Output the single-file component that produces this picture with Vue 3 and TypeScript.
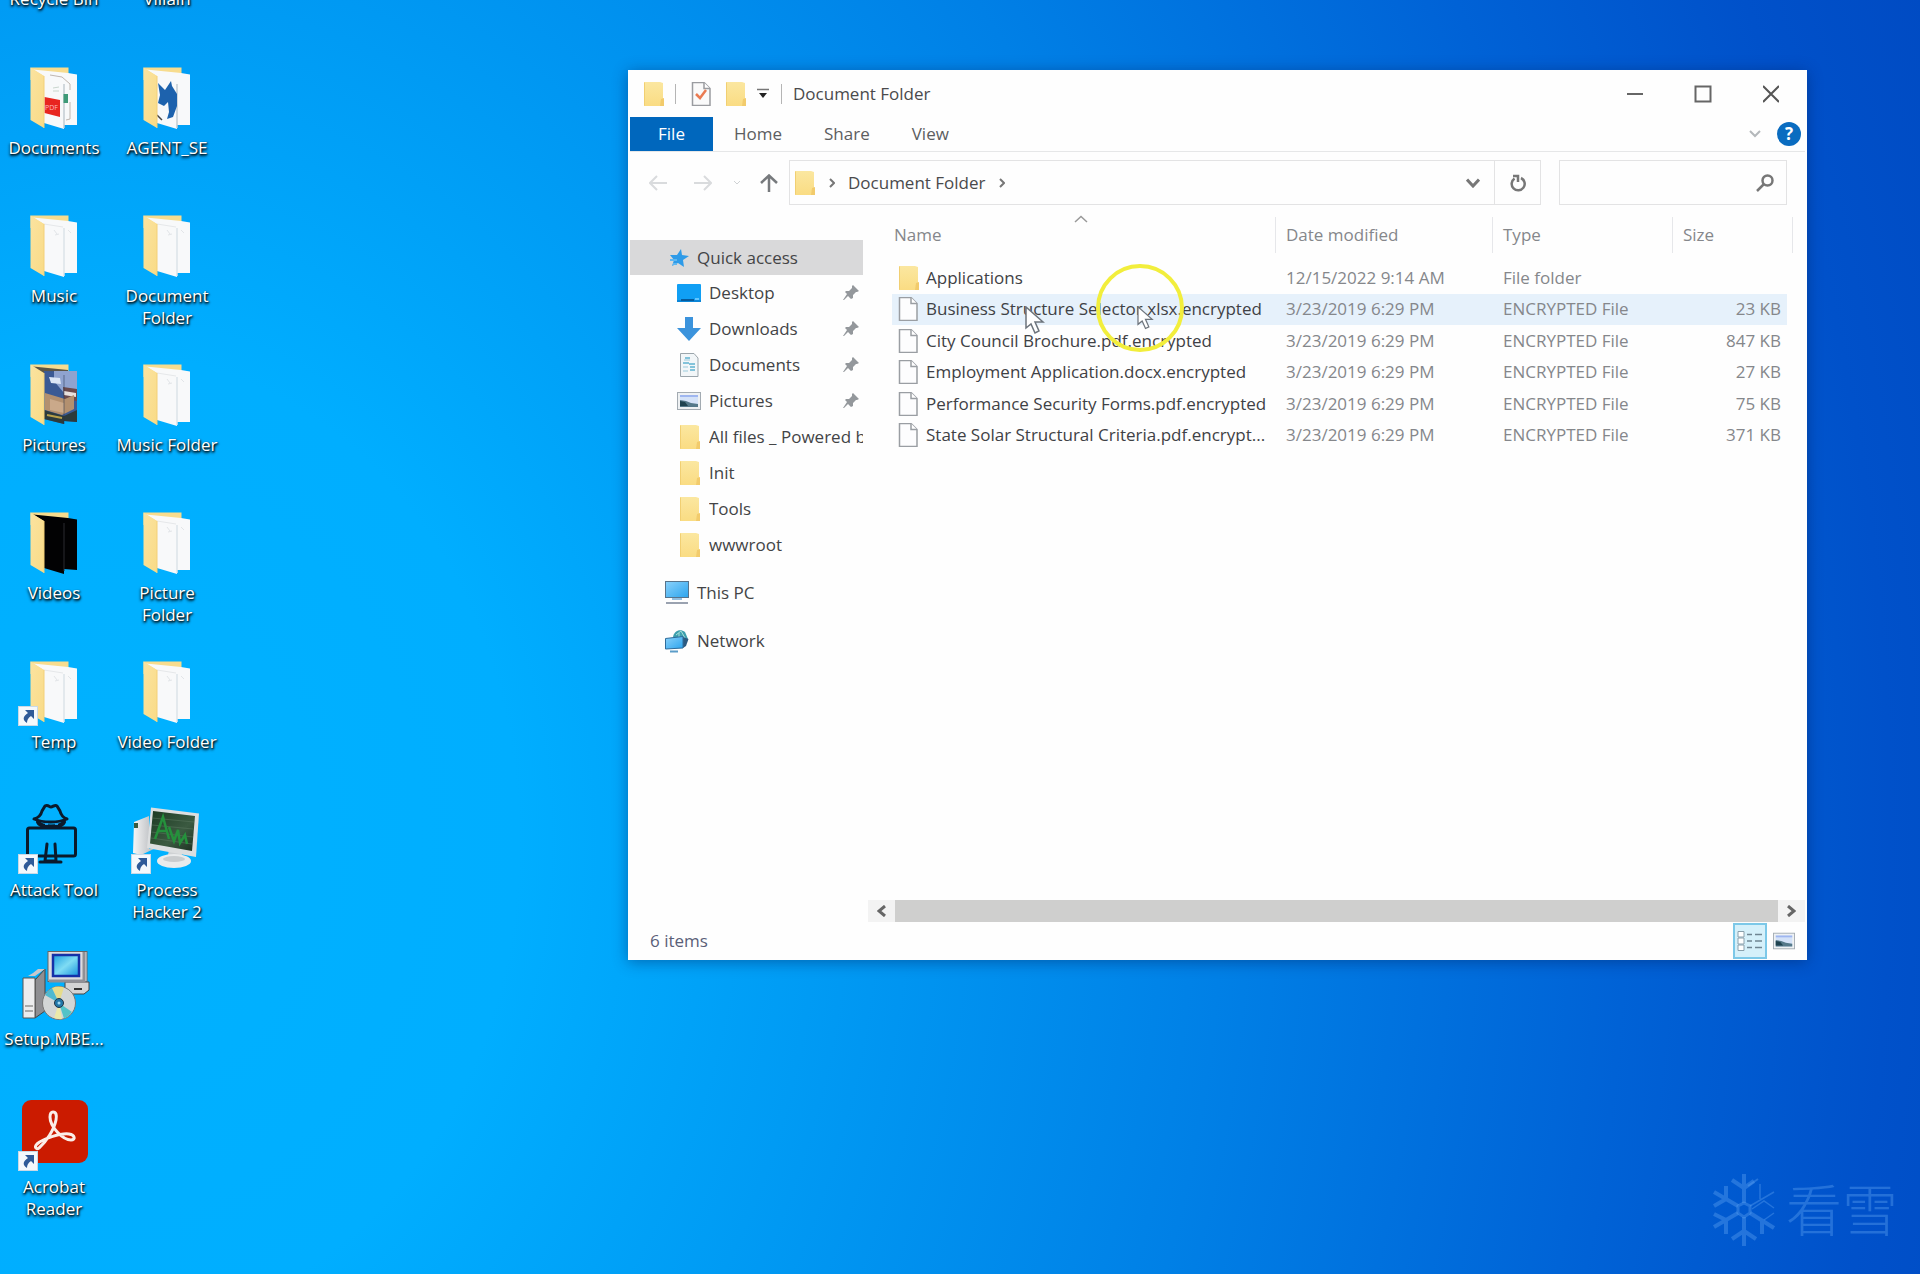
<script setup lang="ts">
interface DesktopItem {
  label: string
  icon: string
  shortcut?: boolean
}

interface FileRow {
  name: string
  date: string
  type: string
  size: string
  folder?: boolean
  hover?: boolean
}

interface Place {
  label: string
  icon: string
  pinned?: boolean
}

const columns: DesktopItem[][] = [
  [
    { label: 'Recycle Bin', icon: 'folder-plain' },
    { label: 'Documents', icon: 'folder-documents' },
    { label: 'Music', icon: 'folder-plain' },
    { label: 'Pictures', icon: 'folder-pictures' },
    { label: 'Videos', icon: 'folder-videos' },
    { label: 'Temp', icon: 'folder-plain', shortcut: true },
    { label: 'Attack Tool', icon: 'attack', shortcut: true },
    { label: 'Setup.MBE...', icon: 'setup' },
    { label: 'Acrobat Reader', icon: 'acrobat', shortcut: true },
  ],
  [
    { label: 'Villain', icon: 'folder-plain' },
    { label: 'AGENT_SE', icon: 'folder-agent' },
    { label: 'Document Folder', icon: 'folder-plain' },
    { label: 'Music Folder', icon: 'folder-plain' },
    { label: 'Picture Folder', icon: 'folder-plain' },
    { label: 'Video Folder', icon: 'folder-plain' },
    { label: 'Process Hacker 2', icon: 'process', shortcut: true },
  ],
]

const tabs: string[] = ['Home', 'Share', 'View']

const quickAccess: Place[] = [
  { label: 'Desktop', icon: 'desktop', pinned: true },
  { label: 'Downloads', icon: 'download', pinned: true },
  { label: 'Documents', icon: 'document', pinned: true },
  { label: 'Pictures', icon: 'picture', pinned: true },
  { label: 'All files _ Powered by', icon: 'folder' },
  { label: 'Init', icon: 'folder' },
  { label: 'Tools', icon: 'folder' },
  { label: 'wwwroot', icon: 'folder' },
]

const stamp = '3/23/2019 6:29 PM'
const kind = 'ENCRYPTED File'

const files: FileRow[] = [
  { name: 'Applications', date: '12/15/2022 9:14 AM', type: 'File folder', size: '', folder: true },
  { name: 'Business Structure Selector.xlsx.encrypted', date: stamp, type: kind, size: '23 KB', hover: true },
  { name: 'City Council Brochure.pdf.encrypted', date: stamp, type: kind, size: '847 KB' },
  { name: 'Employment Application.docx.encrypted', date: stamp, type: kind, size: '27 KB' },
  { name: 'Performance Security Forms.pdf.encrypted', date: stamp, type: kind, size: '75 KB' },
  { name: 'State Solar Structural Criteria.pdf.encrypt...', date: stamp, type: kind, size: '371 KB' },
]
</script>

<template>
  <svg class="sprites" aria-hidden="true">
    <defs>
      <linearGradient id="g-flap" x1="0" y1="0" x2="1" y2="1">
        <stop offset="0" stop-color="#fbe3a0" />
        <stop offset="1" stop-color="#f9db86" />
      </linearGradient>
      <linearGradient id="g-small" x1="0" y1="0" x2="0" y2="1">
        <stop offset="0" stop-color="#fbe7a0" />
        <stop offset="1" stop-color="#fadc83" />
      </linearGradient>
      <linearGradient id="g-screen" x1="0" y1="0" x2="1" y2="1">
        <stop offset="0" stop-color="#8bd2fb" />
        <stop offset="1" stop-color="#2ba4ee" />
      </linearGradient>
      <linearGradient id="g-crt" x1="0" y1="0" x2="1" y2="1">
        <stop offset="0" stop-color="#1b9fe0" />
        <stop offset=".5" stop-color="#7fdcf4" />
        <stop offset="1" stop-color="#1590dc" />
      </linearGradient>
      <linearGradient id="g-tower" x1="0" y1="0" x2="1" y2="0">
        <stop offset="0" stop-color="#f6f6f6" />
        <stop offset="1" stop-color="#a9adb2" />
      </linearGradient>
      <linearGradient id="g-green" x1="0" y1="0" x2="1" y2="1">
        <stop offset="0" stop-color="#1c3a22" />
        <stop offset=".6" stop-color="#3b5a41" />
        <stop offset="1" stop-color="#1d2f22" />
      </linearGradient>
    </defs>

    <symbol id="folder-back" viewBox="0 0 72 72">
      <path d="M12.500 7.500H50.500V20H12.500Z" fill="#f7dc8e" />
    </symbol>
    <symbol id="folder-flap" viewBox="0 0 72 72">
      <path d="M12.500 7.500 26 16V68L12.500 60Z" fill="url(#g-flap)" />
      <path d="M26 16V68" stroke="#f3d078" stroke-width="1" />
    </symbol>

    <symbol id="folder-plain" viewBox="0 0 72 72">
      <use href="#folder-back" />
      <path d="M15 9.500 50 13 59 14.500V65H46V69L26 63V16Z" fill="#f8f9fa" />
      <path d="M46 20V68" stroke="#dde3e8" stroke-width="1.500" />
      <path d="M26 16 45 19" stroke="#e6e8ea" />
      <path d="M36 22l3 4M50 22l3 3M37 27l4-1" stroke="#e2e5e8" />
      <use href="#folder-flap" />
    </symbol>

    <symbol id="folder-documents" viewBox="0 0 72 72">
      <use href="#folder-back" />
      <path d="M15 9.500 50 13 59 14.500V65H46V69L26 63V16Z" fill="#f8f9fa" />
      <path d="M46 24V68" stroke="#c3cbd2" stroke-width="1.500" />
      <path d="M32 15 44 17 52 24V30M52 42V59L48 60" stroke="#bfb6b0" fill="none" />
      <path d="M45.500 34H50V43H45.500Z" fill="#3f9a78" />
      <path d="M35 28l6-1M35 31l6 0" stroke="#c9d6ce" />
      <path d="M26.500 37 42 40V57L26.500 53Z" fill="#e8251f" />
      <text x="27" y="50" font-size="7" font-family="Open Sans, sans-serif" fill="#fbb">PDF</text>
      <use href="#folder-flap" />
    </symbol>

    <symbol id="folder-agent" viewBox="0 0 72 72">
      <use href="#folder-back" />
      <path d="M15 9.500 50 13 59 14.500V65H46V69L26 63V16Z" fill="#f8f9fa" />
      <path d="M46 24V68" stroke="#c3cbd2" stroke-width="1.500" />
      <path d="M27 23 34 30 40 21 41 26 46 34V46L42 57 36 59 38 52 37 42 33 46 27 43 29 35Z" fill="#1d62ad" />
      <path d="M26 55l5 5" stroke="#444" stroke-width="1.500" />
      <use href="#folder-flap" />
    </symbol>

    <symbol id="folder-pictures" viewBox="0 0 72 72">
      <use href="#folder-back" />
      <path d="M15 9.500 50 13V20H26Z" fill="#5c5545" />
      <path d="M26 14 59 14.500V65L46 64V67L26 62Z" fill="#3b5a94" />
      <path d="M36 14H59V32L46 36 36 24Z" fill="#8fa3cf" />
      <path d="M31 20 42 21 43 27 33 26Z" fill="#dce6f5" />
      <path d="M45 30 59 32V44L46 42Z" fill="#6b4a4c" />
      <path d="M46 34 58 36V40L46 38Z" fill="#e8e0dd" />
      <path d="M27 36 47 42 56 38V52L44 58 27 53Z" fill="#b3906f" />
      <path d="M32 42 46 46V56L32 53Z" fill="#caa98a" />
      <path d="M26 53 46 59 59 53V65L46 64V67L26 62Z" fill="#2c3a3c" />
      <path d="M29 58 44 61" stroke="#b8a04a" stroke-width="2" />
      <path d="M46 18V67" stroke="#1f2f4c" stroke-opacity=".5" />
      <use href="#folder-flap" />
    </symbol>

    <symbol id="folder-videos" viewBox="0 0 72 72">
      <use href="#folder-back" />
      <path d="M15 9.500 50 13 59 14.500V65L46 64V69L26 63V16Z" fill="#020203" />
      <path d="M46 18V66" stroke="#2b2b30" />
      <use href="#folder-flap" />
    </symbol>

    <symbol id="attack" viewBox="0 0 72 72">
      <g fill="none" stroke="#0b1a2c" stroke-width="3" stroke-linejoin="round" stroke-linecap="round">
        <path d="M16 17C20 16 23 13 24 9L27 4C30 2 31 5 33 5S37 2 39 4L42 9C43 13 46 16 49 17 40 21 25 21 16 17Z" />
        <path d="M20 20C22 26 44 26 46 20" stroke-width="4" />
        <rect x="9.500" y="26" width="48" height="28" rx="2" />
        <path d="M29 42 27 59H38L37 42M22 60H43" />
      </g>
      <path d="M27 22h3M37 22h3" stroke="#1d9ce8" stroke-width="2" />
    </symbol>

    <symbol id="process" viewBox="0 0 72 72">
      <path d="M3 20 18 14V47L27 45 10 53 2 51Z" fill="url(#g-tower)" />
      <rect x="3" y="21" width="4" height="5" fill="#3b5a3f" />
      <path d="M38 48h12l2 10H36Z" fill="#cfd2d4" />
      <ellipse cx="43" cy="59" rx="17" ry="7" fill="#e9ebec" />
      <ellipse cx="43" cy="57" rx="11" ry="3" fill="#c9ccce" />
      <path d="M20 5.500 68 11.500 65 55 16 46Z" fill="#dcdedf" />
      <path d="M22 9 64 14 61 49 19 41.500Z" fill="url(#g-green)" />
      <path d="M21 16 63 20M21 23 62 27M20 30 62 35M20 36 61 42" stroke="#5d7a62" stroke-opacity=".5" />
      <path d="M24 37 32 15 38 37M27 29H36M38 25 43 39 47 28 49 41 54 33 56 42" fill="none" stroke="#25913c" stroke-width="2.500" />
    </symbol>

    <symbol id="setup" viewBox="0 0 72 72">
      <path d="M47 31H71V39L66 43H47Z" fill="#d4d4d4" stroke="#444" />
      <path d="M56 38h8" stroke="#333" stroke-width="2" />
      <rect x="30" y=".5" width="39" height="30" fill="#dcdcdf" stroke="#666" />
      <path d="M66 1V30H31" fill="none" stroke="#909096" stroke-width="3" />
      <rect x="35" y="4" width="26" height="21" fill="url(#g-crt)" stroke="#1531a8" stroke-width="2.500" />
      <path d="M17 29 27 18V60L17 67Z" fill="#8e8e92" stroke="#444" />
      <path d="M5 27H17V67H5Z" fill="#ececee" stroke="#555" />
      <path d="M5 28 10 25H17L27 18H20L15 22" fill="#c8c8cc" />
      <path d="M7 55h8M7 60h8" stroke="#aaa" stroke-width="2" />
      <circle cx="41" cy="52" r="16.500" fill="#d3d6d6" stroke="#777" />
      <path d="M41 52 34 37A16.500 16.500 0 0 1 46 36.500Z" fill="#e6dc8c" />
      <path d="M41 52 27 44A16.500 16.500 0 0 1 34 37Z" fill="#4fb9cf" />
      <path d="M41 52 54 61A16.500 16.500 0 0 1 46 67.500Z" fill="#53c3c8" />
      <path d="M41 52 44 68A16.500 16.500 0 0 1 36 67Z" fill="#ece9a9" />
      <circle cx="41" cy="52" r="4.500" fill="#2277a8" stroke="#234" />
      <circle cx="41" cy="52" r="1.500" fill="#9fd8f4" />
    </symbol>

    <symbol id="acrobat" viewBox="0 0 72 72">
      <rect x="4" y="1" width="66" height="63" rx="9" fill="#cb1b00" />
      <path
        d="M35 13C38 13 39 16 38 21 36 31 28 43 21 49 18 51 16 48 19 45 26 39 43 34 51 35 57 36 58 41 53 41 45 41 32 28 32 18 32 15 33 13 35 13Z"
        fill="none"
        stroke="#fbeee8"
        stroke-width="3"
        stroke-linejoin="round"
      />
    </symbol>

    <symbol id="folder" viewBox="0 0 24 24">
      <path d="M3 0H19L22 1V17L23 23 20 24H3Z" fill="url(#g-small)" />
      <path d="M19 24 20 17 23 16V24Z" fill="#f2cb6c" />
      <path d="M3.500 .5V23.500" stroke="#f1cf72" />
    </symbol>
    <symbol id="file" viewBox="0 0 24 24">
      <path d="M3.500 .5H15L21 6.500V23.500H3.500Z" fill="#fdfdfe" stroke="#9a9ea3" stroke-width="1.500" />
      <path d="M15 .5V6.500H21" fill="#fff" stroke="#9a9ea3" stroke-width="1.500" />
    </symbol>
    <symbol id="file-check" viewBox="0 0 24 24">
      <path d="M3.500 .5H15L21 6.500V23.500H3.500Z" fill="#fafafa" stroke="#9a9ca0" stroke-width="1.500" />
      <path d="M15 .5V6.500H21" fill="#fff" stroke="#9a9ca0" stroke-width="1.500" />
      <path d="M7 12 11 16 17 8" fill="none" stroke="#ea7b52" stroke-width="2.500" />
    </symbol>
    <symbol id="star" viewBox="0 0 24 24">
      <path d="M16 3 17 9 24 10 18 14 19 21 13 17 7 20 9 14 5 9 12 9Z" fill="#2e9be8" />
      <path d="M5 14h7M8 18h4" stroke="#5eb7f2" stroke-width="2" />
    </symbol>
    <symbol id="desktop" viewBox="0 0 24 24">
      <rect y="3" width="24" height="18" rx="1" fill="#109ff4" />
      <path d="M0 20H24" stroke="#0b86d8" stroke-width="2" />
      <path d="M4 19H17" stroke="#065b9c" stroke-width="2" />
      <path d="M18 18H22" stroke="#62c6ff" stroke-width="2" />
    </symbol>
    <symbol id="download" viewBox="0 0 24 24">
      <path d="M8 0H16V11H24L12 24 0 11H8Z" fill="#3b93dc" />
    </symbol>
    <symbol id="document" viewBox="0 0 24 24">
      <path d="M3.500 .5H17L21 5V23.500H3.500Z" fill="#f2f6f8" stroke="#9ba5ab" />
      <path d="M8 5h5M6 10h6M12 11h6M13 14h5M13 17h5" stroke="#5fb3d0" stroke-width="1.500" />
      <path d="M7 7h6M6 14h5M6 18h5" stroke="#9ccbdc" />
    </symbol>
    <symbol id="picture" viewBox="0 0 24 24">
      <rect x=".5" y="3.500" width="23" height="17" fill="#eef1f3" stroke="#a3abb2" />
      <rect x="3" y="6" width="18" height="12" fill="#d4e2f8" />
      <path d="M3 7H21" stroke="#9fb6f0" stroke-width="2" />
      <path d="M3 18V11L9 12 14 14 21 15V18Z" fill="#55798a" />
      <path d="M3 17V12L8 13 11 17Z" fill="#1f4350" />
    </symbol>
    <symbol id="pc" viewBox="0 0 24 24">
      <rect x=".5" y=".5" width="23" height="16" fill="url(#g-screen)" stroke="#57748c" />
      <path d="M7 18H17" stroke="#93bfe0" stroke-width="2" />
      <path d="M1 22H23" stroke="#9aa2b0" stroke-width="2" />
    </symbol>
    <symbol id="network" viewBox="0 0 24 24">
      <path d="M8 8C9 2 15 -1 20 3L23 10 18 18Z" fill="#3d9fae" />
      <path d="M11 6 16 2 20 9M14 4v8" stroke="#a7e0d8" fill="none" />
      <path d="M18 8 23.500 10 21 17 18 19Z" fill="#2c5a80" />
      <path d="M.5 9.500 18 7.500V19L.5 20Z" fill="url(#g-screen)" stroke="#2e6c9b" />
      <path d="M5 22.500H13" stroke="#5b9dc9" stroke-width="2" />
    </symbol>
    <symbol id="pin" viewBox="0 0 16 16">
      <path d="M10 0 16 6 14 7 13 7 10 10 10 13 8 14 5 11 1 15 0 15 4 9 2 7 3 6 6 6 9 3 9 1Z" fill="#94989c" />
    </symbol>
    <symbol id="cursor" viewBox="0 0 20 30">
      <path d="M1 1V22L6 18 10 27 14 25 10 16 18 16Z" fill="#fff" stroke="#6d747c" stroke-width="1.500" />
    </symbol>
    <symbol id="shortcut" viewBox="0 0 20 20">
      <rect x=".5" y=".5" width="19" height="19" fill="#f4f8fc" stroke="#c9d9e6" />
      <path d="M7 4H16V13L13 10C10 12 9 14 9 17 4 14 5 10 10 7Z" fill="#2f5a98" />
    </symbol>
  </svg>

  <main class="desktop">
    <section class="icons" aria-label="Desktop">
      <div v-for="(column, i) in columns" :key="i" class="icon-column">
        <button v-for="item in column" :key="item.label" type="button" class="icon">
          <span class="icon-art">
            <svg class="art"><use :href="'#' + item.icon" /></svg>
            <svg v-if="item.shortcut" class="badge"><use href="#shortcut" /></svg>
          </span>
          <span class="icon-label">{{ item.label }}</span>
        </button>
      </div>
    </section>

    <section class="window" aria-label="Document Folder">
      <header class="titlebar">
        <svg class="i24"><use href="#folder" /></svg>
        <span class="bar"></span>
        <button type="button" class="tool" aria-label="Properties"><svg class="i24"><use href="#file-check" /></svg></button>
        <button type="button" class="tool" aria-label="New folder"><svg class="i24"><use href="#folder" /></svg></button>
        <button type="button" class="customize" aria-label="Customize">
          <svg width="12" height="12" viewBox="0 0 12 12"><path d="M0 1.500H12" stroke="#777" stroke-width="1.500" /><path d="M2 5H10L6 10Z" fill="#222" /></svg>
        </button>
        <span class="bar"></span>
        <h1>Document Folder</h1>
        <div class="controls">
          <button type="button" aria-label="Minimize"><svg width="16" height="18" viewBox="0 0 16 18"><path d="M0 9H16" stroke="#666" stroke-width="2" /></svg></button>
          <button type="button" aria-label="Maximize"><svg width="18" height="18" viewBox="0 0 18 18"><rect x="1.500" y="1.500" width="15" height="15" fill="none" stroke="#666" stroke-width="2" /></svg></button>
          <button type="button" aria-label="Close"><svg width="16" height="18" viewBox="0 0 16 18"><path d="M0 1 16 17M16 1 0 17" stroke="#555" stroke-width="2" /></svg></button>
        </div>
      </header>

      <div class="ribbon">
        <button type="button" class="tab file-tab">File</button>
        <button v-for="tab in tabs" :key="tab" type="button" class="tab">{{ tab }}</button>
        <button type="button" class="expand" aria-label="Expand the ribbon">
          <svg width="12" height="8" viewBox="0 0 12 8"><path d="M1 1 6 6 11 1" fill="none" stroke="#b4b8bb" stroke-width="2" /></svg>
        </button>
        <button type="button" class="help" aria-label="Help">?</button>
      </div>

      <div class="address-row">
        <div class="nav">
          <button type="button" aria-label="Back"><svg width="18" height="16" viewBox="0 0 18 16"><path d="M18 8H2M8 1 1 8 8 15" fill="none" stroke="#d9dbdd" stroke-width="2" /></svg></button>
          <button type="button" aria-label="Forward"><svg width="18" height="16" viewBox="0 0 18 16"><path d="M0 8H16M10 1 17 8 10 15" fill="none" stroke="#d9dbdd" stroke-width="2" /></svg></button>
          <button type="button" class="recent" aria-label="Recent locations"><svg width="6" height="4" viewBox="0 0 6 4"><path d="M0 0 3 3 6 0" fill="none" stroke="#cfd2d4" /></svg></button>
          <button type="button" class="up" aria-label="Up"><svg width="18" height="18" viewBox="0 0 18 18"><path d="M9 18V2M1 9 9 1.500 17 9" fill="none" stroke="#777a7d" stroke-width="2.500" /></svg></button>
        </div>
        <div class="address">
          <svg class="i24"><use href="#folder" /></svg>
          <svg class="crumb" viewBox="0 0 6 10"><path d="M1 1 5 5 1 9" fill="none" stroke="#777" stroke-width="2" /></svg>
          <span>Document Folder</span>
          <svg class="crumb" viewBox="0 0 6 10"><path d="M1 1 5 5 1 9" fill="none" stroke="#777" stroke-width="2" /></svg>
          <button type="button" class="history" aria-label="Previous locations"><svg width="14" height="10" viewBox="0 0 14 10"><path d="M1 1.500 7 8 13 1.500" fill="none" stroke="#777" stroke-width="3" /></svg></button>
        </div>
        <button type="button" class="refresh" aria-label="Refresh">
          <svg width="16" height="18" viewBox="0 0 16 18"><path d="M11 4A6.500 6.500 0 1 1 4.500 4.500M3 2H8V8" fill="none" stroke="#777" stroke-width="2.500" /></svg>
        </button>
        <label class="search">
          <input type="search" aria-label="Search Document Folder" />
          <svg width="18" height="18" viewBox="0 0 18 18"><circle cx="11.500" cy="6.500" r="5" fill="none" stroke="#777" stroke-width="2.500" /><path d="M8 10 1 17" stroke="#777" stroke-width="2.500" /></svg>
        </label>
      </div>

      <div class="body">
        <nav class="places" aria-label="Places">
          <a href="#" class="place root current"><svg class="i24"><use href="#star" /></svg>Quick access</a>
          <a v-for="place in quickAccess" :key="place.label" href="#" class="place child">
            <svg class="i24"><use :href="'#' + place.icon" /></svg>
            <span class="place-name">{{ place.label }}</span>
            <svg v-if="place.pinned" class="pin"><use href="#pin" /></svg>
          </a>
          <a href="#" class="place root spaced"><svg class="i24"><use href="#pc" /></svg>This PC</a>
          <a href="#" class="place root spaced"><svg class="i24"><use href="#network" /></svg>Network</a>
        </nav>

        <div class="list">
          <table>
            <colgroup>
              <col />
              <col class="c-date" />
              <col class="c-type" />
              <col class="c-size" />
            </colgroup>
            <thead>
              <tr>
                <th>
                  <div class="head first">
                    Name
                    <svg class="sort" viewBox="0 0 14 8"><path d="M1 7 7 1.500 13 7" fill="none" stroke="#999" stroke-width="1.500" /></svg>
                  </div>
                </th>
                <th><div class="head">Date modified</div></th>
                <th><div class="head">Type</div></th>
                <th><div class="head">Size</div></th>
              </tr>
            </thead>
            <tbody>
              <tr v-for="file in files" :key="file.name" :class="{ hover: file.hover }">
                <td>
                  <div class="name">
                    <svg class="i24"><use :href="file.folder ? '#folder' : '#file'" /></svg>
                    <span>{{ file.name }}</span>
                  </div>
                </td>
                <td>{{ file.date }}</td>
                <td>{{ file.type }}</td>
                <td class="size">{{ file.size }}</td>
              </tr>
            </tbody>
          </table>

          <div class="scroll">
            <button type="button" aria-label="Scroll left"><svg width="9" height="12" viewBox="0 0 9 12"><path d="M8 1 2 6 8 11" fill="none" stroke="#666" stroke-width="3" /></svg></button>
            <span class="thumb"></span>
            <button type="button" aria-label="Scroll right"><svg width="9" height="12" viewBox="0 0 9 12"><path d="M1 1 7 6 1 11" fill="none" stroke="#666" stroke-width="3" /></svg></button>
          </div>
        </div>
      </div>

      <footer class="status">
        <span>6 items</span>
        <div class="views">
          <button type="button" class="view active" aria-label="Details">
            <svg width="26" height="20" viewBox="0 0 26 20">
              <path d="M1 .5H7V6H1ZM1 7H7V13H1ZM1 14H7V19.500H1Z" fill="#fff" stroke="#8aa0ac" />
              <path d="M10 3.500H15M18 3.500H25M10 10H15M18 10H25M10 16.500H15M18 16.500H25" stroke="#6f8592" stroke-width="1.500" />
            </svg>
          </button>
          <button type="button" class="view" aria-label="Large icons"><svg class="i22"><use href="#picture" /></svg></button>
        </div>
      </footer>
    </section>

    <svg class="pointer large" aria-hidden="true"><use href="#cursor" /></svg>
    <svg class="pointer small" aria-hidden="true"><use href="#cursor" /></svg>
    <span class="ring"></span>

    <div class="watermark">
      <svg width="64" height="72" viewBox="0 0 64 72" fill="none" stroke="currentColor" stroke-width="4">
        <path d="M32 29 38 32V39L32 43 26 39V32Z" stroke-width="3" />
        <path d="M32 29V0M20 6 32 14 42 7" />
        <path d="M26 32 2 18M14 12V25L2 32" />
        <path d="M26 39 2 53M14 60V46L2 40" />
        <path d="M32 43V72M20 65 32 57 44 65" />
        <path d="M38 39 62 54M50 60V46" />
        <path d="M38 32 62 18M40 35 52 27 62 34M48 25V10M52 46 62 39" stroke-width="1.500" />
        <path d="M36 12 46 5" stroke-width="2" />
      </svg>
      <span>看雪</span>
    </div>
  </main>
</template>

<style>
body {
  margin: 0;
  background: #0078d7;
}
</style>

<style scoped>
.sprites {
  position: absolute;
  width: 0;
  height: 0;
}

.desktop {
  position: relative;
  display: flex;
  min-height: 100vh;
  overflow: hidden;
  background: radial-gradient(ellipse 105% 190% at 6% 66%, #00b2ff 0%, #00aeff 20%, #009bf4 35%, #0080e6 55%, #0062d6 75%, #0051ca 88%, #0048c0 100%);
  font-family: "Open Sans", "Noto Sans", sans-serif;
  font-size: 17px;
  line-height: 22px;
}

button {
  display: flex;
  align-items: center;
  justify-content: center;
  margin: 0;
  padding: 0;
  border: 0;
  background: none;
  color: inherit;
  font: inherit;
}

.i24 {
  flex: none;
  width: 24px;
  height: 24px;
}

.i22 {
  width: 22px;
  height: 22px;
}

.icons {
  display: flex;
  flex: none;
  gap: 5px;
  height: 1337px;
  margin-top: -89px;
  margin-bottom: -63px;
}

.icon-column {
  display: grid;
  grid-template-rows: repeat(9, 1fr);
  width: 108px;
}

.icon {
  flex-direction: column;
  justify-content: flex-start;
  gap: 5px;
  color: #fff;
}

.icon-art {
  position: relative;
  width: 72px;
  height: 72px;
}

.art {
  display: block;
  width: 72px;
  height: 72px;
}

.badge {
  position: absolute;
  left: 0;
  bottom: 0;
  width: 20px;
  height: 20px;
}

.icon-label {
  max-width: 108px;
  text-shadow: 1px 1px 2px #000, 0 2px 3px rgba(0, 0, 0, 0.9);
}

.window {
  display: flex;
  flex: 1;
  flex-direction: column;
  min-width: 0;
  margin: 70px 113px 314px 407px;
  padding: 0 2px;
  background: #fefefe;
  color: #4a4a4c;
  box-shadow: 0 2px 14px rgba(0, 30, 90, 0.45);
}

.titlebar {
  display: flex;
  align-items: center;
  height: 47px;
  padding-left: 11px;
}

.bar {
  width: 1px;
  height: 20px;
  margin: 0 8px 0 10px;
  background: #b5b5b5;
}

.tool {
  width: 34px;
}

.customize {
  width: 22px;
}

.customize + .bar {
  margin: 0 11px 0 7px;
}

h1 {
  margin: 0;
  font-size: 17px;
  font-weight: 400;
}

.controls {
  display: flex;
  margin-left: auto;
}

.controls button {
  width: 68px;
  height: 46px;
}

.ribbon {
  display: flex;
  height: 34px;
  border-bottom: 1px solid #e6e7e8;
  color: #5c5d60;
}

.tab {
  padding: 0 21px;
}

.file-tab {
  width: 83px;
  background: #0067bd;
  color: #fff;
}

.expand {
  width: 36px;
  margin-right: 4px;
  margin-left: auto;
}

.help {
  align-self: center;
  width: 24px;
  height: 24px;
  margin-right: 4px;
  border-radius: 50%;
  background: #0a6cc0;
  color: #fff;
  font-weight: 700;
}

.address-row {
  display: flex;
  align-items: center;
  height: 45px;
  padding: 8px 18px 8px 5px;
}

.nav {
  display: flex;
  align-items: center;
  width: 154px;
}

.nav button {
  width: 45px;
}

.nav .recent {
  width: 24px;
}

.nav .up {
  width: 39px;
}

.address {
  display: flex;
  flex: 1;
  align-items: center;
  gap: 13px;
  box-sizing: border-box;
  height: 45px;
  padding-left: 2px;
  border: 1px solid #e3e3e4;
}

.crumb {
  width: 6px;
  height: 10px;
}

.history {
  width: 42px;
  height: 42px;
  margin-left: auto;
}

.refresh {
  box-sizing: border-box;
  width: 46px;
  height: 45px;
  border: 1px solid #e3e3e4;
  border-left: 0;
}

.search {
  display: flex;
  align-items: center;
  box-sizing: border-box;
  width: 228px;
  height: 45px;
  margin-left: 18px;
  padding-right: 12px;
  border: 1px solid #e3e3e4;
}

.search input {
  flex: 1;
  min-width: 0;
  height: 36px;
  padding: 0 8px;
  border: 0;
  outline: 0;
  background: none;
  font: inherit;
}

.body {
  display: flex;
  flex: 1;
}

.places {
  flex: none;
  width: 233px;
  padding-top: 27px;
}

.place {
  display: flex;
  align-items: center;
  gap: 8px;
  height: 36px;
  color: #434446;
  text-decoration: none;
  white-space: nowrap;
}

.root {
  padding-left: 35px;
}

.child {
  padding-left: 47px;
}

.current {
  height: 35px;
  background: #d9d9da;
}

.spaced {
  margin-top: 12px;
}

.place-name {
  flex: 1;
  overflow: hidden;
}

.pin {
  width: 16px;
  height: 16px;
  margin-right: 4px;
}

.list {
  display: flex;
  flex: 1;
  flex-direction: column;
  min-width: 0;
  padding-top: 4px;
}

table {
  width: calc(100% - 41px);
  height: 234px;
  margin: 0 12px 0 29px;
  border-spacing: 0;
  table-layout: fixed;
  color: #85878b;
}

.c-date {
  width: 217px;
}

.c-type {
  width: 180px;
}

.c-size {
  width: 120px;
}

th {
  height: 45px;
  padding: 0;
  font-weight: 400;
  text-align: left;
  vertical-align: top;
}

.head {
  position: relative;
  height: 36px;
  padding-left: 10px;
  border-right: 1px solid #e6e7ea;
  line-height: 36px;
}

.head.first {
  padding-left: 2px;
}

.sort {
  position: absolute;
  top: -2px;
  left: calc(50% - 10px);
  width: 14px;
  height: 8px;
}

td {
  padding: 0 0 0 10px;
  white-space: nowrap;
}

td:first-child {
  padding-left: 4px;
}

.name {
  display: flex;
  align-items: center;
  gap: 6px;
  color: #3f4145;
}

.size {
  padding: 0 6px 0 0;
  border-right: 6px solid transparent;
  background-clip: padding-box;
  text-align: right;
}

.hover td {
  background-color: #e6f1fb;
}

.scroll {
  display: flex;
  height: 22px;
  margin-top: auto;
  margin-left: 5px;
  background: #f3f3f3;
}

.scroll button {
  width: 27px;
}

.thumb {
  flex: 1;
  background: #cfcfce;
}

.status {
  display: flex;
  align-items: center;
  justify-content: space-between;
  height: 38px;
  padding: 0 4px 0 20px;
  color: #5a6078;
}

.views {
  display: flex;
}

.view {
  box-sizing: border-box;
  width: 34px;
  height: 36px;
}

.view.active {
  border: 2px solid #7cc8e8;
  background: #d5f0fa;
}

.pointer {
  position: absolute;
  top: 306px;
}

.pointer.large {
  left: 1025px;
  width: 20px;
  height: 30px;
}

.pointer.small {
  left: 1137px;
  width: 17px;
  height: 25px;
}

.ring {
  position: absolute;
  top: 264px;
  left: 1096px;
  box-sizing: border-box;
  width: 88px;
  height: 88px;
  border: 4px solid #f2ee3c;
  border-radius: 50%;
}

.watermark {
  position: absolute;
  right: 22px;
  bottom: 28px;
  display: flex;
  align-items: flex-start;
  gap: 10px;
  color: rgba(90, 160, 240, 0.4);
  font-family: "Noto Sans CJK SC", sans-serif;
  font-size: 56px;
  font-weight: 300;
  line-height: 66px;
}
</style>
